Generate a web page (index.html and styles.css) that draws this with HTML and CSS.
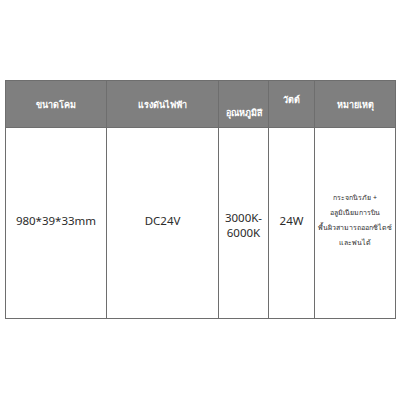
FILE: index.html
```
<!DOCTYPE html>
<html>
<head>
<meta charset="utf-8">
<link rel="stylesheet" href="styles.css">
</head>
<body>
<table class="spec">
  <colgroup>
    <col class="c1"><col class="c2"><col class="c3"><col class="c4"><col class="c5">
  </colgroup>
  <thead>
    <tr class="head">
      <th class="mid">ขนาดโคม</th>
      <th class="mid">แรงดันไฟฟ้า</th>
      <th class="low">อุณหภูมิสี</th>
      <th class="high">วัตต์</th>
      <th class="mid">หมายเหตุ</th>
    </tr>
  </thead>
  <tbody>
    <tr class="row">
      <td>980*39*33mm</td>
      <td>DC24V</td>
      <td class="temp">3000K-<br>6000K</td>
      <td>24W</td>
      <td class="note">กระจกนิรภัย +<br>อลูมิเนียมการบิน<br>พื้นผิวสามารถออกซิไดซ์<br>และพ่นได้</td>
    </tr>
  </tbody>
</table>
</body>
</html>
```
FILE: styles.css
```
html, body {
  margin: 0;
  padding: 0;
  background: #fff;
}
body {
  padding: 80px 5px 0 5px;
  font-family: "Noto Sans", "Open Sans", sans-serif;
}
.spec {
  border-collapse: collapse;
  width: 390px;
  table-layout: fixed;
}
.c1 { width: 101px; }
.c2 { width: 112px; }
.c3 { width: 50px; }
.c4 { width: 46px; }
.c5 { width: 81px; }
.head { height: 47px; }
.row { height: 191px; }
.spec th, .spec td {
  border: 1px solid #6e6e6e;
  padding: 0;
  text-align: center;
}
.spec th {
  background: #7f7f7f;
  color: #fff;
  font-size: 9px;
  font-weight: bold;
  line-height: 13px;
}
.spec th.mid { vertical-align: middle; }
.spec th.low { vertical-align: bottom; padding-bottom: 8px; }
.spec th.high { vertical-align: top; padding-top: 12px; }
.spec td {
  color: #2b2b2b;
  font-size: 11.5px;
  vertical-align: middle;
  padding-bottom: 6px;
}
.spec td.temp {
  line-height: 15px;
  padding-top: 4px;
  padding-bottom: 0;
}
.spec td.note {
  font-size: 7px;
  line-height: 15px;
  padding-bottom: 6px;
}
```
